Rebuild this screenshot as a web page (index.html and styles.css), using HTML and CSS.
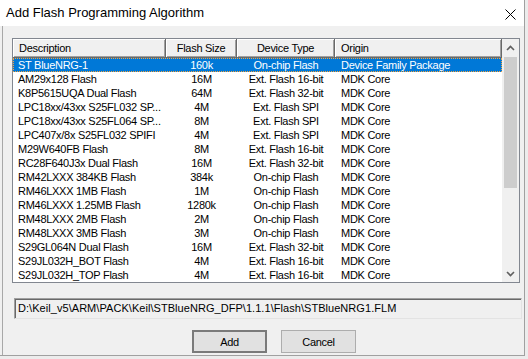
FILE: index.html
```html
<!DOCTYPE html>
<html>
<head>
<meta charset="utf-8">
<link rel="stylesheet" href="styles.css">
</head>
<body>
<div class="dialog">
  <div class="titlebar">
    <span class="title">Add Flash Programming Algorithm</span>
    <svg class="close" width="11" height="11" viewBox="0 0 11 11"><path d="M0.5 0.5 L10.5 10.5 M10.5 0.5 L0.5 10.5" stroke="#000" stroke-width="1" fill="none"/></svg>
  </div>
  <div class="content">
    <div class="listview">
      <div class="lv-main">
        <div class="lv-header">
          <div class="hcell left">Description</div>
          <div class="hcell center">Flash Size</div>
          <div class="hcell center">Device Type</div>
          <div class="hcell left">Origin</div>
        </div>
        <div class="row selected"><span class="c1">ST BlueNRG-1</span><span class="c2">160k</span><span class="c3">On-chip Flash</span><span class="c4">Device Family Package</span></div>
        <div class="row"><span class="c1">AM29x128 Flash</span><span class="c2">16M</span><span class="c3">Ext. Flash 16-bit</span><span class="c4">MDK Core</span></div>
        <div class="row"><span class="c1">K8P5615UQA Dual Flash</span><span class="c2">64M</span><span class="c3">Ext. Flash 32-bit</span><span class="c4">MDK Core</span></div>
        <div class="row"><span class="c1">LPC18xx/43xx S25FL032 SP...</span><span class="c2">4M</span><span class="c3">Ext. Flash SPI</span><span class="c4">MDK Core</span></div>
        <div class="row"><span class="c1">LPC18xx/43xx S25FL064 SP...</span><span class="c2">8M</span><span class="c3">Ext. Flash SPI</span><span class="c4">MDK Core</span></div>
        <div class="row"><span class="c1">LPC407x/8x S25FL032 SPIFI</span><span class="c2">4M</span><span class="c3">Ext. Flash SPI</span><span class="c4">MDK Core</span></div>
        <div class="row"><span class="c1">M29W640FB Flash</span><span class="c2">8M</span><span class="c3">Ext. Flash 16-bit</span><span class="c4">MDK Core</span></div>
        <div class="row"><span class="c1">RC28F640J3x Dual Flash</span><span class="c2">16M</span><span class="c3">Ext. Flash 32-bit</span><span class="c4">MDK Core</span></div>
        <div class="row"><span class="c1">RM42LXXX 384KB Flash</span><span class="c2">384k</span><span class="c3">On-chip Flash</span><span class="c4">MDK Core</span></div>
        <div class="row"><span class="c1">RM46LXXX 1MB Flash</span><span class="c2">1M</span><span class="c3">On-chip Flash</span><span class="c4">MDK Core</span></div>
        <div class="row"><span class="c1">RM46LXXX 1.25MB Flash</span><span class="c2">1280k</span><span class="c3">On-chip Flash</span><span class="c4">MDK Core</span></div>
        <div class="row"><span class="c1">RM48LXXX 2MB Flash</span><span class="c2">2M</span><span class="c3">On-chip Flash</span><span class="c4">MDK Core</span></div>
        <div class="row"><span class="c1">RM48LXXX 3MB Flash</span><span class="c2">3M</span><span class="c3">On-chip Flash</span><span class="c4">MDK Core</span></div>
        <div class="row"><span class="c1">S29GL064N Dual Flash</span><span class="c2">16M</span><span class="c3">Ext. Flash 32-bit</span><span class="c4">MDK Core</span></div>
        <div class="row"><span class="c1">S29JL032H_BOT Flash</span><span class="c2">4M</span><span class="c3">Ext. Flash 16-bit</span><span class="c4">MDK Core</span></div>
        <div class="row"><span class="c1">S29JL032H_TOP Flash</span><span class="c2">4M</span><span class="c3">Ext. Flash 16-bit</span><span class="c4">MDK Core</span></div>
      </div>
      <div class="scrollbar">
        <div class="sb-btn"><svg width="9" height="6" viewBox="0 0 9 6"><path d="M1 5 L4.5 1.5 L8 5" stroke="#606060" stroke-width="1.6" fill="none"/></svg></div>
        <div class="sb-track"><div class="sb-thumb"></div></div>
        <div class="sb-btn"><svg width="9" height="6" viewBox="0 0 9 6"><path d="M1 1 L4.5 4.5 L8 1" stroke="#606060" stroke-width="1.6" fill="none"/></svg></div>
      </div>
    </div>
    <div class="path">D:\Keil_v5\ARM\PACK\Keil\STBlueNRG_DFP\1.1.1\Flash\STBlueNRG1.FLM</div>
    <div class="buttons">
      <button class="btn default">Add</button>
      <button class="btn">Cancel</button>
    </div>
  </div>
</div>
</body>
</html>
```

FILE: styles.css
```css
html, body {
  margin: 0;
  padding: 0;
}
body {
  width: 528px;
  height: 359px;
  background: #ececec;
  overflow: hidden;
  font-family: "Liberation Sans", Arial, sans-serif;
  font-size: 11px;
  letter-spacing: -0.28px;
  color: #000;
}
.dialog {
  width: 525px;
  height: 356px;
  box-sizing: border-box;
  border-right: 1px solid #a0a0a0;
  border-bottom: 1px solid #a0a0a0;
  background: #f0f0f0;
  display: flex;
  flex-direction: column;
}
.titlebar {
  height: 26px;
  flex: none;
  background: #fff;
  display: flex;
  align-items: center;
  justify-content: space-between;
  padding-left: 6px;
  padding-right: 8px;
}
.title {
  font-size: 13px;
  letter-spacing: 0;
  line-height: 26px;
  color: #000;
}
.close {
  display: block;
  margin-top: 2px;
}
.content {
  flex: 1;
  margin-left: 2px;
  border-left: 1px solid #a8a8a8;
  padding: 12px 0 0 9px;
}
.listview {
  width: 508px;
  height: 245px;
  box-sizing: border-box;
  border: 1px solid #828790;
  background: #fff;
  display: flex;
}
.lv-main {
  width: 489px;
  display: flex;
  flex-direction: column;
}
.lv-header {
  display: grid;
  grid-template-columns: 153px 71px 98px 167px;
  height: 19px;
}
.hcell {
  background: #f0f0f0;
  box-sizing: border-box;
  border-right: 1px solid #696969;
  border-bottom: 1px solid #696969;
  box-shadow: inset 1px 1px #ffffff, inset -1px -1px #a0a0a0;
  line-height: 18px;
  white-space: nowrap;
  overflow: hidden;
}
.hcell.left {
  padding-left: 6px;
}
.hcell.center {
  text-align: center;
}
.row {
  display: grid;
  grid-template-columns: 153px 71px 98px 167px;
  height: 14px;
  line-height: 14px;
  white-space: nowrap;
  box-sizing: border-box;
}
.row span {
  overflow: hidden;
}
.c1 {
  padding-left: 5px;
}
.c2, .c3 {
  text-align: center;
}
.c4 {
  padding-left: 6px;
}
.row.selected {
  background: #0078d7;
  color: #fff;
  outline: 1px dotted #f5a33c;
  outline-offset: -1px;
}
.scrollbar {
  width: 17px;
  background: #f0f0f0;
  display: flex;
  flex-direction: column;
}
.sb-btn {
  height: 17px;
  display: flex;
  align-items: center;
  justify-content: center;
  flex: none;
}
.sb-track {
  flex: 1;
  padding: 1px 2px 0 2px;
}
.sb-thumb {
  height: 131px;
  background: #cdcdcd;
}
.path {
  margin-top: 15px;
  margin-left: 2px;
  width: 508px;
  height: 21px;
  box-sizing: border-box;
  border: 1px solid;
  border-color: #a0a0a0 #e3e3e3 #e3e3e3 #a0a0a0;
  box-shadow: inset 1px 1px #696969;
  background: #f0f0f0;
  padding-left: 3px;
  line-height: 19px;
  white-space: nowrap;
  letter-spacing: 0.05px;
}
.buttons {
  display: flex;
  gap: 14px;
  margin-top: 11px;
  margin-left: 180px;
}
.btn {
  width: 75px;
  height: 23px;
  box-sizing: border-box;
  font-family: "Liberation Sans", Arial, sans-serif;
  font-size: 11px;
  letter-spacing: -0.28px;
  color: #000;
  background: #e1e1e1;
  border: 1px solid #adadad;
  padding: 0;
  margin: 0;
}
.btn.default {
  border: 2px solid #7a7a7a;
}
```
